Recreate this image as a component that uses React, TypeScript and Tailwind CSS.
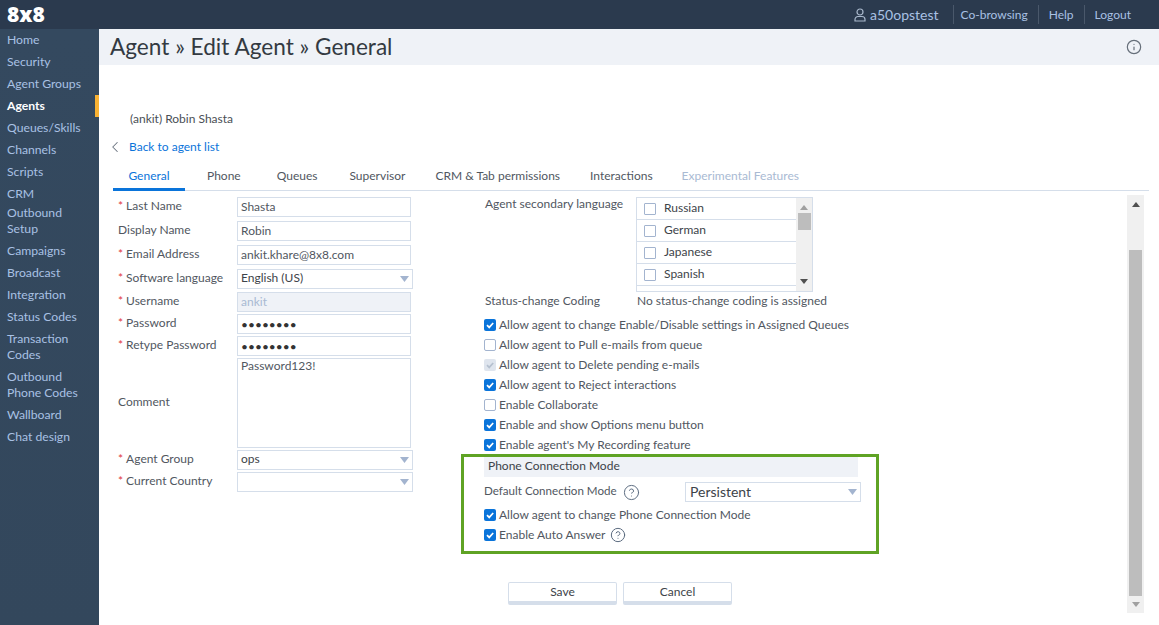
import React from "react";
import { Info, CircleHelp, ChevronLeft } from "lucide-react";

const nav: { t: React.ReactNode; active?: boolean; two?: string }[] = [
  { t: "Home" },
  { t: "Security" },
  { t: "Agent Groups" },
  { t: "Agents", active: true },
  { t: "Queues/Skills" },
  { t: "Channels" },
  { t: "Scripts" },
  { t: "CRM" },
  { t: "Outbound Setup", two: "pb-[3px]" },
  { t: "Campaigns" },
  { t: "Broadcast" },
  { t: "Integration" },
  { t: "Status Codes" },
  { t: "Transaction Codes", two: "py-[3px]" },
  { t: "Outbound Phone Codes", two: "py-[3px]" },
  { t: "Wallboard" },
  { t: "Chat design" },
];

function Caret() {
  return (
    <svg width="9" height="6" viewBox="0 0 9 6">
      <path d="M0 0h9L4.5 6z" fill="#a3b4cf" />
    </svg>
  );
}

function Row({
  label,
  req,
  h = "h-5",
  mt,
  children,
}: {
  label: string;
  req?: boolean;
  h?: string;
  mt: string;
  children: React.ReactNode;
}) {
  return (
    <div className={`flex ${mt} ${h}`}>
      <div className={`w-[119px] shrink-0 text-[#51575f] leading-[18px] ${h === "h-5" ? "" : "self-center pb-[2px]"}`}>
        {req && <span className="text-[#e0383e] mr-[3px]">*</span>}
        {label}
      </div>
      {children}
    </div>
  );
}

function Field({ v, cls = "" }: { v: string; cls?: string }) {
  return (
    <div className={`w-[174px] h-5 border border-[#d5deea] px-[3px] leading-[18px] text-[#51575f] ${cls}`}>{v}</div>
  );
}

function Select({ v, w = "w-[176px]", cls = "" }: { v: string; w?: string; cls?: string }) {
  return (
    <div className={`${w} h-5 border border-[#d5deea] pl-[3px] pr-[3px] flex items-center justify-between text-[#3d4349] ${cls}`}>
      <span className="-mt-[2px]">{v}</span>
      <Caret />
    </div>
  );
}

function Check({ state }: { state: "on" | "off" | "dis" }) {
  if (state === "off")
    return <span className="w-3 h-3 rounded-[2px] border border-[#a3b4cf] bg-white shrink-0" />;
  return (
    <span
      className={`w-3 h-3 rounded-[2px] shrink-0 flex items-center justify-center ${
        state === "on" ? "bg-[#0a74da]" : "bg-[#dfe5ee]"
      }`}
    >
      <svg width="10" height="10" viewBox="0 0 10 10" fill="none">
        <path
          d="M2 5.2 4.2 7.4 8.2 3"
          stroke={state === "on" ? "#fff" : "#b5c0cf"}
          strokeWidth="1.7"
        />
      </svg>
    </span>
  );
}

function CheckRow({ s, t, help }: { s: "on" | "off" | "dis"; t: string; help?: boolean }) {
  return (
    <div className="h-5 flex items-center text-[#51575f]">
      <Check state={s} />
      <span className="ml-[3px]">{t}</span>
      {help && <CircleHelp size={16} strokeWidth={1.5} color="#5b6b7f" className="ml-[5px]" />}
    </div>
  );
}

export default function App() {
  const tabs: [string, string][] = [
    ["Phone", "ml-[22px] text-[#51575f]"],
    ["Queues", "ml-[36px] text-[#51575f]"],
    ["Supervisor", "ml-[32px] text-[#51575f]"],
    ["CRM & Tab permissions", "ml-[30px] text-[#51575f]"],
    ["Interactions", "ml-[30px] text-[#51575f]"],
    ["Experimental Features", "ml-[29px] text-[#a9bad3]"],
  ];
  return (
    <div className="w-[1159px] h-[625px] overflow-hidden flex flex-col bg-white text-[12px] font-['Lato','Open_Sans',sans-serif]">
      <header className="h-[29px] shrink-0 bg-[#2b3a4e] flex items-center pl-[7px]">
        <span className="text-white font-black text-[21px] leading-none font-['Noto_Sans',sans-serif]">8x8</span>
        <div className="ml-auto flex items-center text-[#a9c1e4] text-[12px]">
          <svg width="12" height="14" viewBox="0 0 12 14" fill="none" stroke="#a9b8cc" strokeWidth="1.2">
            <circle cx="6" cy="4" r="3" />
            <path d="M1 13v-1.5a3 3 0 0 1 3-3h4a3 3 0 0 1 3 3V13z" />
          </svg>
          <span className="ml-[4px] text-[14px]">a50opstest</span>
          <span className="ml-[14px] pl-[7px] border-l border-[#4a586b] h-[19px] leading-[19px]">Co-browsing</span>
          <span className="ml-[10px] pl-[10px] border-l border-[#4a586b] h-[19px] leading-[19px]">Help</span>
          <span className="ml-[10px] pl-[10px] mr-[28px] border-l border-[#4a586b] h-[19px] leading-[19px]">Logout</span>
        </div>
      </header>
      <div className="flex flex-1 min-h-0">
        <nav className="w-[99px] shrink-0 bg-gradient-to-b from-[#34495f] to-[#33475c] text-[12.2px]">
          {nav.map((n, i) => (
            <div
              key={i}
              className={`pl-[7px] pr-2 ${
                n.two ? `leading-[16px] ${n.two}` : "h-[22px] leading-[22px]"
              } ${
                n.active
                  ? "text-white font-bold border-r-[4px] border-[#f9b233]"
                  : "text-[#a9c1e4]"
              }`}
            >
              {n.t}
            </div>
          ))}
        </nav>
        <main className="flex-1 min-w-0 flex flex-col">
          <div className="h-9 shrink-0 bg-[#eff2f7] flex items-center pl-[11px] pr-[17px] justify-between">
            <h1 className="text-[22.6px] leading-[32px] text-[#333a42] font-normal">Agent » Edit Agent » General</h1>
            <Info size={16} strokeWidth={1.8} color="#666f7a" />
          </div>
          <div className="pl-[31px] mt-[46px] h-4 leading-4 text-[#4a4f55]">(ankit) Robin Shasta</div>
          <div className="pl-[7px] mt-[12px] h-4 flex items-center text-[#0a74da]">
            <ChevronLeft size={18} strokeWidth={1.4} color="#6b7480" />
            <span className="ml-[5px]">Back to agent list</span>
          </div>
          <div className="ml-[14px] mr-[10px] mt-[12px] h-[24px] border-b border-[#d5deea] flex items-start shrink-0">
            <div className="w-[72px] h-[24px] border-b-[3px] border-[#0a74da] text-[#0a74da] text-center leading-[18px] -mb-px">General</div>
            {tabs.map(([t, c]) => (
              <div key={t} className={`leading-[18px] ${c}`}>{t}</div>
            ))}
          </div>
          <div className="flex flex-1 min-h-0">
            <div className="flex-1 flex min-w-0 pl-[19px]">
              <section className="w-[367px] shrink-0 flex flex-col">
                <Row label="Last Name" req mt="mt-[6px]"><Field v="Shasta" /></Row>
                <Row label="Display Name" mt="mt-1"><Field v="Robin" /></Row>
                <Row label="Email Address" req mt="mt-1"><Field v="ankit.khare@8x8.com" /></Row>
                <Row label="Software language" req mt="mt-1"><Select v="English (US)" /></Row>
                <Row label="Username" req mt="mt-[3px]"><Field v="ankit" cls="bg-[#eff2f7] !text-[#a9bad3]" /></Row>
                <Row label="Password" req mt="mt-[2px]"><Field v="••••••••" cls="!text-[#333] !leading-[19px]" /></Row>
                <Row label="Retype Password" req mt="mt-[2px]"><Field v="••••••••" cls="!text-[#333] !leading-[19px]" /></Row>
                <Row label="Comment" h="h-[90px]" mt="mt-[2px]">
                  <div className="w-[174px] h-[90px] border border-[#d5deea] px-[3px] leading-[14px] text-[#51575f]">Password123!</div>
                </Row>
                <Row label="Agent Group" req mt="mt-[2px]"><Select v="ops" /></Row>
                <Row label="Current Country" req mt="mt-[2px]"><Select v="" /></Row>
              </section>
              <section className="flex-1 min-w-0 flex flex-col">
                <div className="flex mt-[6px]">
                  <div className="w-[151px] shrink-0 text-[#51575f] leading-[14px]">Agent secondary language</div>
                  <div className="w-[177px] h-[95px] border border-[#d5deea] flex overflow-hidden">
                    <div className="flex-1">
                      {["Russian", "German", "Japanese", "Spanish"].map((l) => (
                        <div key={l} className="h-[22px] border-b border-[#d5deea] flex items-center pl-[7px] text-[#3d4349]">
                          <span className="w-3 h-3 border border-[#a3b4cf] rounded-[1px]" />
                          <span className="ml-[8px] -mt-[1px]">{l}</span>
                        </div>
                      ))}
                    </div>
                    <div className="w-4 bg-[#f0f0f0] flex flex-col items-center">
                      <svg width="8" height="5" viewBox="0 0 8 5" className="mt-[7px]"><path d="M0 5h8L4 0z" fill="#a0a0a0" /></svg>
                      <div className="w-[13px] h-[17px] bg-[#bdbdbd] mt-[3px]" />
                      <svg width="8" height="5" viewBox="0 0 8 5" className="mt-auto mb-[7px]"><path d="M0 0h8L4 5z" fill="#505050" /></svg>
                    </div>
                  </div>
                </div>
                <div className="flex mt-[2px] h-[14px] items-center text-[#51575f]">
                  <div className="w-[152px] shrink-0">Status-change Coding</div>
                  <div>No status-change coding is assigned</div>
                </div>
                <div className="mt-[7px] -ml-px">
                  <CheckRow s="on" t="Allow agent to change Enable/Disable settings in Assigned Queues" />
                  <CheckRow s="off" t="Allow agent to Pull e-mails from queue" />
                  <CheckRow s="dis" t="Allow agent to Delete pending e-mails" />
                  <CheckRow s="on" t="Allow agent to Reject interactions" />
                  <CheckRow s="off" t="Enable Collaborate" />
                  <CheckRow s="on" t="Enable and show Options menu button" />
                  <CheckRow s="on" t="Enable agent's My Recording feature" />
                </div>
                <div className="w-[418px] h-[100px] -ml-[24px] mt-[-1px] border-[3px] border-[#5fa324] pl-[20px] shrink-0">
                  <div className="w-[374px] h-5 bg-[#eff2f7] pl-[4px] leading-[18px] text-[#3d4349]">Phone Connection Mode</div>
                  <div className="flex items-center h-5 mt-[5px] text-[#51575f]">
                    <span className="w-[132px] whitespace-nowrap -mt-[2px] text-[11.6px]">Default Connection Mode</span>
                    <CircleHelp size={17} strokeWidth={1.4} color="#5b6b7f" className="ml-[7px]" />
                    <Select v="Persistent" cls="ml-[45px] !text-[14px] !pl-[4px]" />
                  </div>
                  <div className="mt-[3px]">
                    <CheckRow s="on" t="Allow agent to change Phone Connection Mode" />
                    <CheckRow s="on" t="Enable Auto Answer" help />
                  </div>
                </div>
                <div className="flex mt-[28px] ml-[23px] gap-[6px] text-[#3d4349]">
                  <button className="w-[109px] h-[23px] border border-[#d5deea] border-b-[4px] rounded-[2px] bg-white leading-4">Save</button>
                  <button className="w-[109px] h-[23px] border border-[#d5deea] border-b-[4px] rounded-[2px] bg-white leading-4">Cancel</button>
                </div>
              </section>
            </div>
            <div className="w-[17px] h-[418px] mt-[4px] mr-[15px] bg-[#f0f0f0] flex flex-col items-center shrink-0">
              <svg width="8" height="5" viewBox="0 0 8 5" className="mt-[7px]"><path d="M0 5h8L4 0z" fill="#505050" /></svg>
              <div className="w-[13px] h-[346px] bg-[#bdbdbd] mt-[43px]" />
              <svg width="8" height="5" viewBox="0 0 8 5" className="mt-[6px]"><path d="M0 0h8L4 5z" fill="#a0a0a0" /></svg>
            </div>
          </div>
        </main>
      </div>
    </div>
  );
}
